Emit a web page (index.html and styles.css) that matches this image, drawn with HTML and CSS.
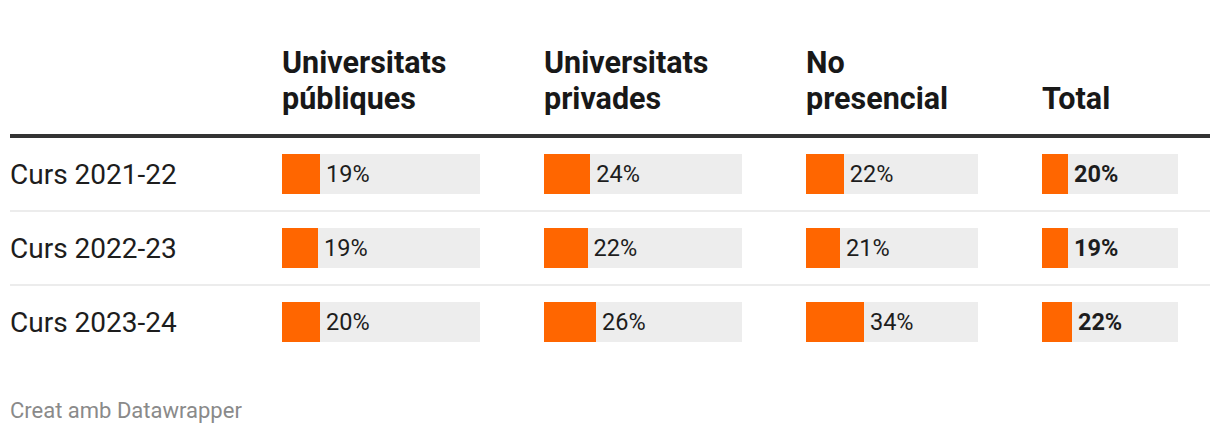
FILE: index.html
```html
<!DOCTYPE html>
<html lang="ca">
<head>
<meta charset="utf-8">
<link rel="stylesheet" href="styles.css">
</head>
<body>
<div class="chart">
  <div class="table">
    <div class="row head">
      <div class="cell label"></div>
      <div class="cell c2">Universitats<br>públiques</div>
      <div class="cell c3">Universitats<br>privades</div>
      <div class="cell c4">No<br>presencial</div>
      <div class="cell c5">Total</div>
    </div>
    <div class="row">
      <div class="cell label">Curs 2021-22</div>
      <div class="cell c2"><div class="bar"><div class="fill" style="width:19.2%"></div><span class="val">19%</span></div></div>
      <div class="cell c3"><div class="bar"><div class="fill" style="width:23.4%"></div><span class="val">24%</span></div></div>
      <div class="cell c4"><div class="bar"><div class="fill" style="width:22%"></div><span class="val">22%</span></div></div>
      <div class="cell c5"><div class="bar"><div class="fill" style="width:19.1%"></div><span class="val bold">20%</span></div></div>
    </div>
    <div class="row">
      <div class="cell label">Curs 2022-23</div>
      <div class="cell c2"><div class="bar"><div class="fill" style="width:18.2%"></div><span class="val">19%</span></div></div>
      <div class="cell c3"><div class="bar"><div class="fill" style="width:22%"></div><span class="val">22%</span></div></div>
      <div class="cell c4"><div class="bar"><div class="fill" style="width:19.8%"></div><span class="val">21%</span></div></div>
      <div class="cell c5"><div class="bar"><div class="fill" style="width:19.1%"></div><span class="val bold">19%</span></div></div>
    </div>
    <div class="row">
      <div class="cell label">Curs 2023-24</div>
      <div class="cell c2"><div class="bar"><div class="fill" style="width:19.2%"></div><span class="val">20%</span></div></div>
      <div class="cell c3"><div class="bar"><div class="fill" style="width:26.3%"></div><span class="val">26%</span></div></div>
      <div class="cell c4"><div class="bar"><div class="fill" style="width:33.7%"></div><span class="val">34%</span></div></div>
      <div class="cell c5"><div class="bar"><div class="fill" style="width:22%"></div><span class="val bold">22%</span></div></div>
    </div>
  </div>
  <div class="footer">Creat amb Datawrapper</div>
</div>
</body>
</html>
```

FILE: styles.css
```css
html, body {
  margin: 0;
  padding: 0;
  background: #ffffff;
}
.chart {
  padding: 45px 10px 0 10px;
  font-family: Roboto, "Liberation Sans", sans-serif;
  color: #1d1d1d;
}
.table {
  display: flex;
  flex-direction: column;
}
.row {
  display: grid;
  grid-template-columns: 272px 262px 262px 236px 168px;
  align-items: center;
  padding: 16px 0;
  border-bottom: 2px solid #ececec;
}
.row:last-child {
  border-bottom: none;
}
.row.head {
  padding: 0 0 17px 0;
  border-bottom: 4px solid #333333;
  align-items: end;
  font-weight: 700;
  font-size: 30.5px;
  line-height: 36px;
  color: #181818;
}
.cell.label {
  font-size: 28px;
  color: #1d1d1d;
}
.c2 .bar, .c3 .bar { width: 198px; }
.c4 .bar { width: 172px; }
.c5 .bar { width: 136px; }
.bar {
  height: 40px;
  background: #ededed;
  display: flex;
  align-items: center;
}
.fill {
  height: 40px;
  background: #ff6600;
  flex: none;
}
.val {
  padding-left: 6px;
  font-size: 23.5px;
  color: #1d1d1d;
}
.val.bold {
  font-weight: 700;
}
.footer {
  margin-top: 40px;
  font-size: 22px;
  color: #8a8a8a;
}
```
